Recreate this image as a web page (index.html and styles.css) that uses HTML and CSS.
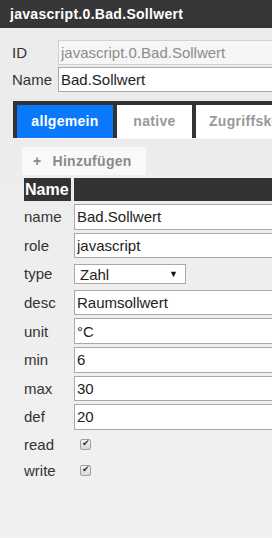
FILE: index.html
```html
<!DOCTYPE html>
<html lang="de">
<head>
    <meta charset="UTF-8">
    <meta name="viewport" content="width=device-width, initial-scale=1.0">
    <title>javascript.0.Bad.Sollwert</title>
    <link rel="stylesheet" href="styles.css">
</head>
<body>
    <div class="dialog-title">javascript.0.Bad.Sollwert</div>

    <div class="dialog-body">
        <div class="field">
            <label class="field-label" for="obj-id">ID</label>
            <input class="field-input readonly" id="obj-id" value="javascript.0.Bad.Sollwert" readonly>
        </div>
        <div class="field">
            <label class="field-label" for="obj-name">Name</label>
            <input class="field-input" id="obj-name" value="Bad.Sollwert">
        </div>

        <div class="tabs">
            <ul class="tab-nav">
                <li class="tab active">allgemein</li>
                <li class="tab tab-native">native</li>
                <li class="tab tab-acl">Zugriffskontrolle</li>
            </ul>

            <div class="tab-panel">
                <button class="add-btn"><span class="plus">+</span>Hinzufügen</button>

                <table class="props">
                    <tr>
                        <th class="col-name">Name</th>
                        <th class="col-value"></th>
                    </tr>
                    <tr>
                        <td>name</td>
                        <td><input class="prop-input" value="Bad.Sollwert"></td>
                    </tr>
                    <tr>
                        <td>role</td>
                        <td><input class="prop-input" value="javascript"></td>
                    </tr>
                    <tr>
                        <td>type</td>
                        <td>
                            <span class="select-wrap">
                                <select class="prop-select">
                                    <option>Zahl</option>
                                    <option>Text</option>
                                    <option>Logikwert</option>
                                </select>
                            </span>
                        </td>
                    </tr>
                    <tr>
                        <td>desc</td>
                        <td><input class="prop-input" value="Raumsollwert"></td>
                    </tr>
                    <tr>
                        <td>unit</td>
                        <td><input class="prop-input" value="°C"></td>
                    </tr>
                    <tr>
                        <td>min</td>
                        <td><input class="prop-input" value="6"></td>
                    </tr>
                    <tr>
                        <td>max</td>
                        <td><input class="prop-input" value="30"></td>
                    </tr>
                    <tr>
                        <td>def</td>
                        <td><input class="prop-input" value="20"></td>
                    </tr>
                    <tr class="check-row">
                        <td>read</td>
                        <td><input type="checkbox" class="prop-check" checked></td>
                    </tr>
                    <tr class="check-row">
                        <td>write</td>
                        <td><input type="checkbox" class="prop-check" checked></td>
                    </tr>
                </table>
            </div>
        </div>
    </div>
</body>
</html>
```

FILE: styles.css
```css
body {
    margin: 0;
    font-family: 'Liberation Sans', Arial, sans-serif;
    font-size: 15px;
    color: #333;
    background: linear-gradient(#ebebeb, #f1f1f1);
    min-height: 538px;
    overflow: hidden;
}
.dialog-title {
    height: 28px;
    line-height: 28px;
    padding-left: 10px;
    background-color: #363636;
    color: #fff;
    font-weight: bold;
    font-size: 14px;
    letter-spacing: 0.3px;
    white-space: nowrap;
}
.dialog-body {
    width: 420px;
    padding: 12px 0 0 12px;
}
.field {
    display: flex;
    align-items: center;
    margin-bottom: 2px;
}
.field-label {
    width: 46px;
}
.field-input {
    box-sizing: border-box;
    width: 320px;
    height: 25px;
    padding: 0 2px;
    border: 1px solid #a9a9a9;
    background: #fff;
    font-family: inherit;
    font-size: 15px;
    color: #222;
    outline: none;
}
.field-input.readonly {
    border-color: #d0d0d0;
    background: #f6f6f6;
    color: #8c8c8c;
}

/* tabs */
.tabs {
    margin: 9px 0 0 1px;
}
.tab-nav {
    list-style: none;
    margin: 0;
    padding: 4px 0 0 4px;
    display: flex;
    gap: 4px;
    background-color: #333;
    border-bottom: 1px solid #f7f7f7;
}
.tab {
    height: 33px;
    line-height: 33px;
    width: 96px;
    text-align: center;
    background: #fff;
    color: #999;
    font-weight: bold;
    font-size: 14px;
    letter-spacing: 0.3px;
    white-space: nowrap;
}
.tab.active {
    background-color: #0a78fa;
    color: #fff;
}
.tab-native {
    width: 75px;
}
.tab-acl {
    width: 140px;
    text-align: left;
    padding-left: 13px;
}
.tab-panel {
    padding-left: 8px;
}
.add-btn {
    display: block;
    box-sizing: border-box;
    width: 124px;
    height: 28px;
    margin: 8px 0 0 1px;
    padding: 0 0 0 11px;
    text-align: left;
    border: none;
    border-radius: 2px;
    background: #f9f9f9;
    color: #8a8a8a;
    font-family: inherit;
    font-weight: bold;
    font-size: 14px;
    letter-spacing: 0.3px;
    cursor: pointer;
}
.plus {
    margin-right: 11px;
    color: #888;
}

/* property table */
.props {
    border-collapse: separate;
    border-spacing: 3px 3px;
    width: 400px;
}
.props th {
    height: 23px;
    padding: 0;
    background-color: #333;
    color: #fff;
    font-size: 16px;
    text-align: left;
}
.props th.col-name {
    width: 46px;
    padding-left: 1px;
}
.props td {
    padding: 0;
    height: 25.6px;
    white-space: nowrap;
}
.props tr.check-row td {
    height: 23px;
}
.prop-input {
    display: block;
    box-sizing: border-box;
    width: 320px;
    height: 25.6px;
    padding: 0 2px;
    border: 1px solid #a9a9a9;
    background: #fff;
    font-family: inherit;
    font-size: 15px;
    color: #222;
    outline: none;
}
.select-wrap {
    position: relative;
    display: inline-block;
    vertical-align: middle;
}
.select-wrap::after {
    content: "▼";
    position: absolute;
    right: 8px;
    top: 5px;
    font-size: 9px;
    color: #111;
    pointer-events: none;
}
.prop-select {
    appearance: none;
    -webkit-appearance: none;
    box-sizing: border-box;
    width: 112px;
    height: 20px;
    padding: 0 0 0 5px;
    border: 1px solid #a9a9a9;
    border-radius: 0;
    background: #fff;
    font-family: inherit;
    font-size: 15px;
    color: #222;
}
.prop-check {
    appearance: none;
    -webkit-appearance: none;
    position: relative;
    display: block;
    width: 11px;
    height: 11px;
    margin: 0 0 0 6px;
    border: 1px solid #a0a0a0;
    border-radius: 2px;
    background: linear-gradient(#f4f4f4, #d8d8d8);
}
.prop-check:checked::after {
    content: "✔";
    position: absolute;
    left: 1px;
    top: -2px;
    font-size: 9px;
    color: #333;
}
```
